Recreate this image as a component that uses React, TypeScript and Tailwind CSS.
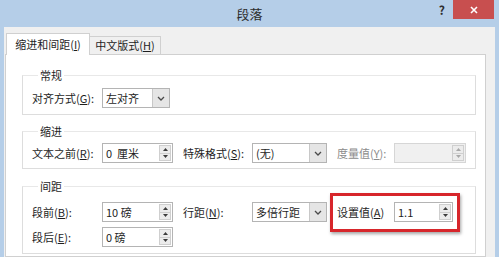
import React from "react";

const FONT = { fontFamily: '"Noto Sans CJK SC", "Noto Sans", sans-serif' };

function U({ c }: { c: string }) {
  return <span className="underline underline-offset-[1px] decoration-[1px]">{c}</span>;
}

function Chevron() {
  return (
    <svg width="8" height="5" viewBox="0 0 8 5">
      <path d="M1 1 L4 4 L7 1" fill="none" stroke="#4a4a4a" strokeWidth="1.3" />
    </svg>
  );
}

function Arrows({ disabled }: { disabled?: boolean }) {
  const c = disabled ? "#a8a8a8" : "#3c3c3c";
  return (
    <div className="flex w-[13px] flex-col items-stretch py-[1px] pr-[1px]">
      <div className="flex flex-1 items-center justify-center border border-[#cfcfcf] bg-[#ececec]">
        <svg width="5" height="3" viewBox="0 0 5 3">
          <path d="M0 3 L2.5 0 L5 3 Z" fill={c} />
        </svg>
      </div>
      <div className="flex flex-1 items-center justify-center border border-t-0 border-[#cfcfcf] bg-[#ececec]">
        <svg width="5" height="3" viewBox="0 0 5 3">
          <path d="M0 0 L2.5 3 L5 0 Z" fill={c} />
        </svg>
      </div>
    </div>
  );
}

function Spin({ value, className, disabled }: { value: string; className: string; disabled?: boolean }) {
  return (
    <div
      className={
        "flex h-[20px] border " +
        (disabled ? "border-[#d6d6d6] bg-[#f0f0f0] " : "border-[#b4b4b4] bg-white ") +
        className
      }
    >
      <div className="flex flex-1 items-center whitespace-pre pl-[3px] text-[11px] text-[#1e1e1e]">{value}</div>
      <Arrows disabled={disabled} />
    </div>
  );
}

function Select({ value, className }: { value: string; className: string }) {
  return (
    <div className={"flex h-[20px] border border-[#b4b4b4] bg-white " + className}>
      <div className="flex flex-1 items-center pl-[3px] text-[11px] text-[#1e1e1e]">{value}</div>
      <div className="flex w-[17px] items-center justify-center border-l border-[#c8c8c8] bg-[#e5e5e5]">
        <Chevron />
      </div>
    </div>
  );
}

function Group({ title, children, className }: { title: string; children: React.ReactNode; className: string }) {
  return (
    <fieldset className={"border border-[#dddddd] border-t-[#e8e8e8] px-[9px] " + className}>
      <legend className="ml-[6px] px-[2px] text-[11px] leading-[15px] text-[#1e1e1e]">{title}</legend>
      {children}
    </fieldset>
  );
}

function Label({ children, className }: { children: React.ReactNode; className: string }) {
  return <div className={"shrink-0 text-[11px] leading-[20px] text-[#1e1e1e] " + className}>{children}</div>;
}

export default function App() {
  return (
    <div className="relative flex h-[257px] w-[499px] flex-col overflow-hidden bg-[#b5cee8]" style={FONT}>
      {/* title bar */}
      <div className="relative flex h-[27px] shrink-0 items-center justify-center">
        <span className="text-[13px] leading-none text-[#2b2b2b]">段落</span>
        <div className="absolute right-[5px] top-0 flex items-start">
          <span className="mr-[8px] mt-[4px] text-[12px] font-bold leading-none text-[#2d2d2d]">?</span>
          <div className="flex h-[19px] w-[41px] items-center justify-center bg-[#c84f4f]">
            <svg width="8" height="8" viewBox="0 0 8 8">
              <path d="M1 1 L7 7 M7 1 L1 7" stroke="#fff" strokeWidth="1.6" />
            </svg>
          </div>
        </div>
      </div>

      {/* body */}
      <div className="mx-[4px] flex flex-1 flex-col bg-[#f0f0f0] pl-[1px] pr-[9px] pt-[6px]">
        {/* tabs */}
        <div className="flex items-end">
          <div className="relative z-10 -mb-[1px] ml-[1px] flex h-[22px] w-[84px] items-center justify-center border border-b-0 border-[#d0d0d0] bg-white text-[11px] text-[#1e1e1e]">
            缩进和间距(<U c="I" />)
          </div>
          <div className="flex h-[18px] w-[71px] items-center justify-center border border-b-0 border-l-0 border-[#d0d0d0] bg-[#f0f0f0] text-[11px] text-[#1e1e1e]">
            中文版式(<U c="H" />)
          </div>
        </div>

        {/* panel */}
        <div className="flex flex-1 flex-col border border-[#d0d0d0] bg-white pl-[16px] pr-[9px] pt-[13px]">
          <Group title="常规" className="pb-[6px] pt-[5px]">
            <div className="flex items-center">
              <Label className="w-[70px]">
                对齐方式(<U c="G" />):
              </Label>
              <Select value="左对齐" className="w-[68px]" />
            </div>
          </Group>

          <Group title="缩进" className="mt-[9px] pb-[5px] pt-[4px]">
            <div className="flex items-center">
              <Label className="w-[70px]">
                文本之前(<U c="R" />):
              </Label>
              <Spin value="0  厘米" className="w-[71px]" />
              <Label className="ml-[10px] w-[69px]">
                特殊格式(<U c="S" />):
              </Label>
              <Select value="(无)" className="w-[75px]" />
              <Label className="ml-[10px] w-[57px] !text-[#8c8c8c]">
                度量值(<U c="Y" />):
              </Label>
              <Spin value="" className="w-[72px]" disabled />
            </div>
          </Group>

          <Group title="间距" className="mt-[10px] pb-[6px] pt-[8px]">
            <div className="flex items-center">
              <Label className="w-[70px]">
                段前(<U c="B" />):
              </Label>
              <Spin value="10 磅" className="w-[71px]" />
              <Label className="ml-[10px] w-[69px]">
                行距(<U c="N" />):
              </Label>
              <Select value="多倍行距" className="w-[75px]" />
              <Label className="ml-[10px] w-[57px]">
                设置值(<U c="A" />)
              </Label>
              <Spin value="1.1" className="w-[59px]" />
            </div>
            <div className="mt-[5px] flex items-center">
              <Label className="w-[70px]">
                段后(<U c="E" />):
              </Label>
              <Spin value="0 磅" className="w-[71px]" />
            </div>
          </Group>
        </div>
      </div>

      {/* red annotation box */}
      <div className="absolute left-[330px] top-[193px] h-[39px] w-[130px] border-[3px] border-[#d7262b] shadow-[1px_2px_3px_rgba(0,0,0,0.35)]" />
    </div>
  );
}
